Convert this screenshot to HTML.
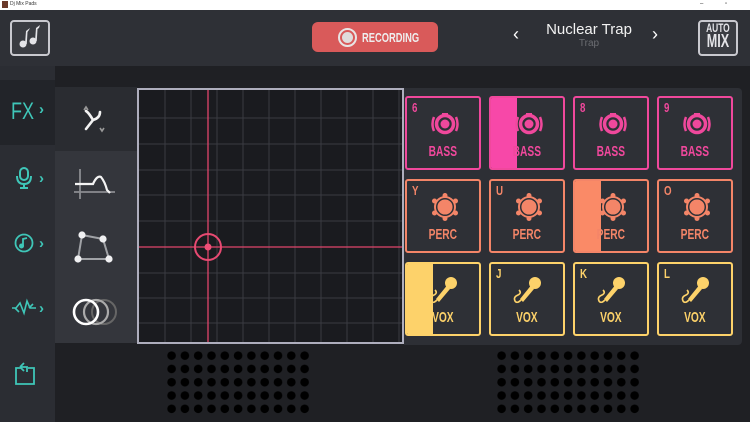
<!DOCTYPE html>
<html><head><meta charset="utf-8"><style>
*{margin:0;padding:0;box-sizing:border-box}
body{width:750px;height:422px;overflow:hidden;background:#1f2024;font-family:"Liberation Sans",sans-serif;position:relative}
.a{position:absolute}
.cond{font-weight:bold}
.sx{display:inline-block;transform:scaleX(0.7);transform-origin:center}
.pad{position:absolute;width:76px;height:74px;border:2px solid;border-radius:3px;background:#2e3036;overflow:hidden}
.pad .fill{position:absolute;left:0;top:0;bottom:0}
.pad .k{position:absolute;left:5px;top:2px;font-size:13px;transform:scaleX(0.75);transform-origin:left}
.pad .lbl{position:absolute;left:0;right:0;top:45px;text-align:center;font-size:15px}
.pad .lbl span{display:inline-block;transform:scaleX(0.68)}
.pad svg{position:absolute;left:22px;top:10px}
.b{border-color:#f0489c;color:#f0489c}.b .fill{background:#f748a8}
.p{border-color:#f48568;color:#f48568}.p .fill{background:#fa8a67}
.v{border-color:#fdd26a;color:#fdd26a}.v .fill{background:#fdd26a}
</style></head><body>
<svg width="0" height="0" style="position:absolute">
<defs>
<symbol id="bass" viewBox="0 0 32 32"><circle cx="16" cy="16" r="8.5" fill="none" stroke="currentColor" stroke-width="3.5"/><circle cx="16" cy="16" r="4.5" fill="currentColor"/><path d="M5 9 Q2 16 5 23 M27 9 Q30 16 27 23" fill="none" stroke="currentColor" stroke-width="2.5"/><rect x="13" y="5" width="6" height="2" fill="currentColor"/></symbol>
<symbol id="perc" viewBox="0 0 32 32"><g fill="currentColor"><circle cx="16" cy="16" r="11"/><circle cx="16" cy="4.5" r="2.5"/><circle cx="16" cy="27.5" r="2.5"/><circle cx="5.5" cy="10" r="2.5"/><circle cx="26.5" cy="10" r="2.5"/><circle cx="5.5" cy="22" r="2.5"/><circle cx="26.5" cy="22" r="2.5"/></g><circle cx="16" cy="16" r="8.3" fill="none" stroke="#2e3036" stroke-width="1.5"/></symbol>
<symbol id="vox" viewBox="0 0 32 32"><circle cx="22" cy="9" r="6" fill="currentColor"/><path d="M17.5 12 L7 25 L10 28 L21 15Z" fill="currentColor"/><path d="M8 26 Q4 30 2 27 Q0 23 5 21 Q9 19 6 16" fill="none" stroke="currentColor" stroke-width="1.6"/></symbol>
</defs></svg>

<!-- title bar -->
<div class="a" style="left:0;top:0;width:750px;height:10px;background:#fff"></div>
<div class="a" style="left:2px;top:1px;width:6px;height:7px;background:#6b3a2a"></div>
<div class="a" style="left:10px;top:0;font-size:5px;color:#333;line-height:9px">Dj Mix Pads</div>
<div class="a" style="left:700px;top:0;font-size:6px;color:#333;line-height:9px;letter-spacing:10px">– ▫ ×</div>

<!-- header -->
<div class="a" style="left:0;top:10px;width:750px;height:56px;background:#2e3036"></div>
<div class="a" style="left:10px;top:20px;width:40px;height:36px;border:2px solid #c9c9cf;border-radius:4px;background:#3a3c42"></div>
<svg class="a" style="left:18px;top:24px" width="24" height="26" viewBox="0 0 24 26"><g fill="#e4e4e8"><circle cx="5" cy="20" r="3.5"/><circle cx="15" cy="17" r="3.5"/><path d="M7 20 L8 7 L12 4 L11 6 L9.5 8 L8.8 20Z"/><path d="M17 17 L18 4 L22 1 L21 4 L19.5 5 L18.8 17Z"/></g></svg>

<div class="a" style="left:312px;top:22px;width:126px;height:30px;background:#d95a5a;border-radius:6px"></div>
<div class="a" style="left:338px;top:28px;width:19px;height:19px;border:2px solid #e8e4e4;border-radius:50%"></div>
<div class="a" style="left:342px;top:32px;width:11px;height:11px;background:#e0dcdc;border-radius:50%"></div>
<div class="a cond" style="left:362px;top:30px;font-size:13px;color:#eee;transform:scaleX(0.72);transform-origin:left">RECORDING</div>

<div class="a" style="left:513px;top:24px;font-size:18px;color:#fff">‹</div>
<div class="a" style="left:652px;top:24px;font-size:18px;color:#fff">›</div>
<div class="a" style="left:530px;top:21px;width:118px;text-align:center;font-size:15px;color:#f2f2f2">Nuclear Trap</div>
<div class="a" style="left:540px;top:38px;width:98px;text-align:center;font-size:10px;color:#6b6d72">Trap</div>

<div class="a" style="left:698px;top:20px;width:40px;height:36px;border:2px solid #c9c9cf;border-radius:4px;background:#3a3c42"></div>
<div class="a cond" style="left:698px;top:23px;width:40px;text-align:center;font-size:12px;line-height:11px;color:#e4e4e8"><span class="sx">AUTO</span></div>
<div class="a cond" style="left:698px;top:33px;width:40px;text-align:center;font-size:18px;line-height:17px;color:#e4e4e8"><span class="sx">MIX</span></div>

<!-- sidebar -->
<div class="a" style="left:0;top:66px;width:55px;height:356px;background:#2b2d33"></div>
<div class="a" style="left:0;top:80px;width:55px;height:65px;background:#222429"></div>
<div class="a" style="left:11px;top:98px;font-size:24px;color:#3fc6b8;transform:scaleX(0.75);transform-origin:left">FX</div>
<div class="a" style="left:39px;top:101px;font-size:15px;color:#3fc6b8;font-weight:bold">›</div>
<svg class="a" style="left:14px;top:166px" width="20" height="24" viewBox="0 0 20 24" fill="none" stroke="#3fc6b8" stroke-width="2"><rect x="6" y="2" width="8" height="12" rx="4"/><path d="M3 10 Q3 18 10 18 Q17 18 17 10 M10 18 V21 M6 22 H14"/></svg>
<div class="a" style="left:39px;top:170px;font-size:15px;color:#3fc6b8;font-weight:bold">›</div>
<svg class="a" style="left:14px;top:233px" width="20" height="20" viewBox="0 0 20 20" fill="none" stroke="#3fc6b8" stroke-width="1.8"><circle cx="10" cy="10" r="8.5"/><path d="M9 13 V6 L13 5"/><circle cx="7.5" cy="13" r="1.6" fill="#3fc6b8"/></svg>
<div class="a" style="left:39px;top:235px;font-size:15px;color:#3fc6b8;font-weight:bold">›</div>
<svg class="a" style="left:11px;top:298px" width="26" height="20" viewBox="0 0 26 20" fill="none" stroke="#3fc6b8" stroke-width="1.6"><path d="M1 10 H5 L9 5 L13 15 L16 3 L19 10 L25 10 M4 10 L8 14 M18 10 L22 6"/></svg>
<div class="a" style="left:39px;top:300px;font-size:15px;color:#3fc6b8;font-weight:bold">›</div>
<svg class="a" style="left:14px;top:362px" width="22" height="24" viewBox="0 0 22 24" fill="none" stroke="#3fc6b8" stroke-width="1.8"><path d="M8 6 H2 V22 H20 V6 H14 M6 5 L10 1 M6 5 L10 9 M6 5 H13 V10"/></svg>

<!-- fx column -->
<div class="a" style="left:55px;top:87px;width:82px;height:256px;background:#34363c"></div>
<div class="a" style="left:55px;top:87px;width:82px;height:64px;background:#2a2c31"></div>
<svg class="a" style="left:80px;top:104px" width="28" height="30" viewBox="0 0 28 30" fill="none"><path d="M6 25 L13 16 Q9 9 6 7 M13 16 Q20 14 20 8" stroke="#f2f2f2" stroke-width="2.6" stroke-linecap="round"/><path d="M4 6 L6 3 L8 6 M20 24 L22 27 L24 24" stroke="#999" stroke-width="1.6"/></svg>
<svg class="a" style="left:73px;top:167px" width="42" height="34" viewBox="0 0 42 34" fill="none"><path d="M7 2 V32 M1 25 H42" stroke="#8a8c90" stroke-width="1.8"/><path d="M2 17 H20 Q24 8 28 10 Q32 15 34 23 L37 26" stroke="#f4f4f4" stroke-width="2.2"/></svg>
<svg class="a" style="left:73px;top:231px" width="44" height="36" viewBox="0 0 44 36" fill="none"><path d="M9 4 L30 8 L36 28 L5 28 Z" stroke="#a0a2a6" stroke-width="2"/><g fill="#f0f0f2"><circle cx="9" cy="4" r="3.6"/><circle cx="30" cy="8" r="3.6"/><circle cx="36" cy="28" r="3.6"/><circle cx="5" cy="28" r="3.6"/></g></svg>
<svg class="a" style="left:72px;top:297px" width="46" height="30" viewBox="0 0 46 30" fill="none"><circle cx="32" cy="15" r="12" stroke="#666" stroke-width="2"/><circle cx="24" cy="15" r="12" stroke="#aaa" stroke-width="2.2"/><circle cx="14" cy="15" r="12" stroke="#fff" stroke-width="2.6"/></svg>

<!-- grid pad -->
<div class="a" style="left:137px;top:88px;width:267px;height:256px;border:2px solid #aeaebd;background:#1a1b1f"></div>
<svg class="a" style="left:139px;top:90px" width="263" height="252">
<g stroke="#3a3b42" stroke-width="1">
<path d="M26 0V252M52 0V252M78 0V252M104 0V252M130 0V252M156 0V252M182 0V252M208 0V252M234 0V252M260 0V252"/>
<path d="M0 28H263M0 54H263M0 80H263M0 105H263M0 131H263M0 157H263M0 183H263M0 208H263M0 233H263"/>
</g>
<path d="M69 0V252M0 157H263" stroke="#e0456b" stroke-width="1.3"/>
<circle cx="69" cy="157" r="13" fill="none" stroke="#e84a72" stroke-width="2"/>
<circle cx="69" cy="157" r="3.5" fill="#ef4f77"/>
</svg>

<!-- pads panel -->
<div class="a" style="left:404px;top:88px;width:338px;height:257px;background:#2d2f35;border-radius:0 4px 4px 0"></div>

<div class="pad b cond" style="left:405px;top:96px"><span class="k">6</span><svg width="32" height="32"><use href="#bass"/></svg><div class="lbl"><span>BASS</span></div></div>
<div class="pad b cond" style="left:489px;top:96px"><div class="fill" style="width:26px"></div><svg width="32" height="32"><use href="#bass"/></svg><div class="lbl"><span>BASS</span></div></div>
<div class="pad b cond" style="left:573px;top:96px"><span class="k">8</span><svg width="32" height="32"><use href="#bass"/></svg><div class="lbl"><span>BASS</span></div></div>
<div class="pad b cond" style="left:657px;top:96px"><span class="k">9</span><svg width="32" height="32"><use href="#bass"/></svg><div class="lbl"><span>BASS</span></div></div>

<div class="pad p cond" style="left:405px;top:179px"><span class="k">Y</span><svg width="32" height="32"><use href="#perc"/></svg><div class="lbl"><span>PERC</span></div></div>
<div class="pad p cond" style="left:489px;top:179px"><span class="k">U</span><svg width="32" height="32"><use href="#perc"/></svg><div class="lbl"><span>PERC</span></div></div>
<div class="pad p cond" style="left:573px;top:179px"><div class="fill" style="width:26px"></div><svg width="32" height="32"><use href="#perc"/></svg><div class="lbl"><span>PERC</span></div></div>
<div class="pad p cond" style="left:657px;top:179px"><span class="k">O</span><svg width="32" height="32"><use href="#perc"/></svg><div class="lbl"><span>PERC</span></div></div>

<div class="pad v cond" style="left:405px;top:262px"><div class="fill" style="width:26px"></div><svg width="32" height="32"><use href="#vox"/></svg><div class="lbl"><span>VOX</span></div></div>
<div class="pad v cond" style="left:489px;top:262px"><span class="k">J</span><svg width="32" height="32"><use href="#vox"/></svg><div class="lbl"><span>VOX</span></div></div>
<div class="pad v cond" style="left:573px;top:262px"><span class="k">K</span><svg width="32" height="32"><use href="#vox"/></svg><div class="lbl"><span>VOX</span></div></div>
<div class="pad v cond" style="left:657px;top:262px"><span class="k">L</span><svg width="32" height="32"><use href="#vox"/></svg><div class="lbl"><span>VOX</span></div></div>

<!-- speaker grilles -->
<svg class="a" style="left:165px;top:349px" width="150" height="70">
<defs><pattern id="dots" x="0" y="0" width="13.3" height="13.3" patternUnits="userSpaceOnUse"><circle cx="6.6" cy="6.6" r="4.3" fill="#000"/></pattern></defs>
<rect width="146" height="67" fill="url(#dots)"/></svg>
<svg class="a" style="left:495px;top:349px" width="150" height="70">
<rect width="146" height="67" fill="url(#dots)"/></svg>
</body></html>
